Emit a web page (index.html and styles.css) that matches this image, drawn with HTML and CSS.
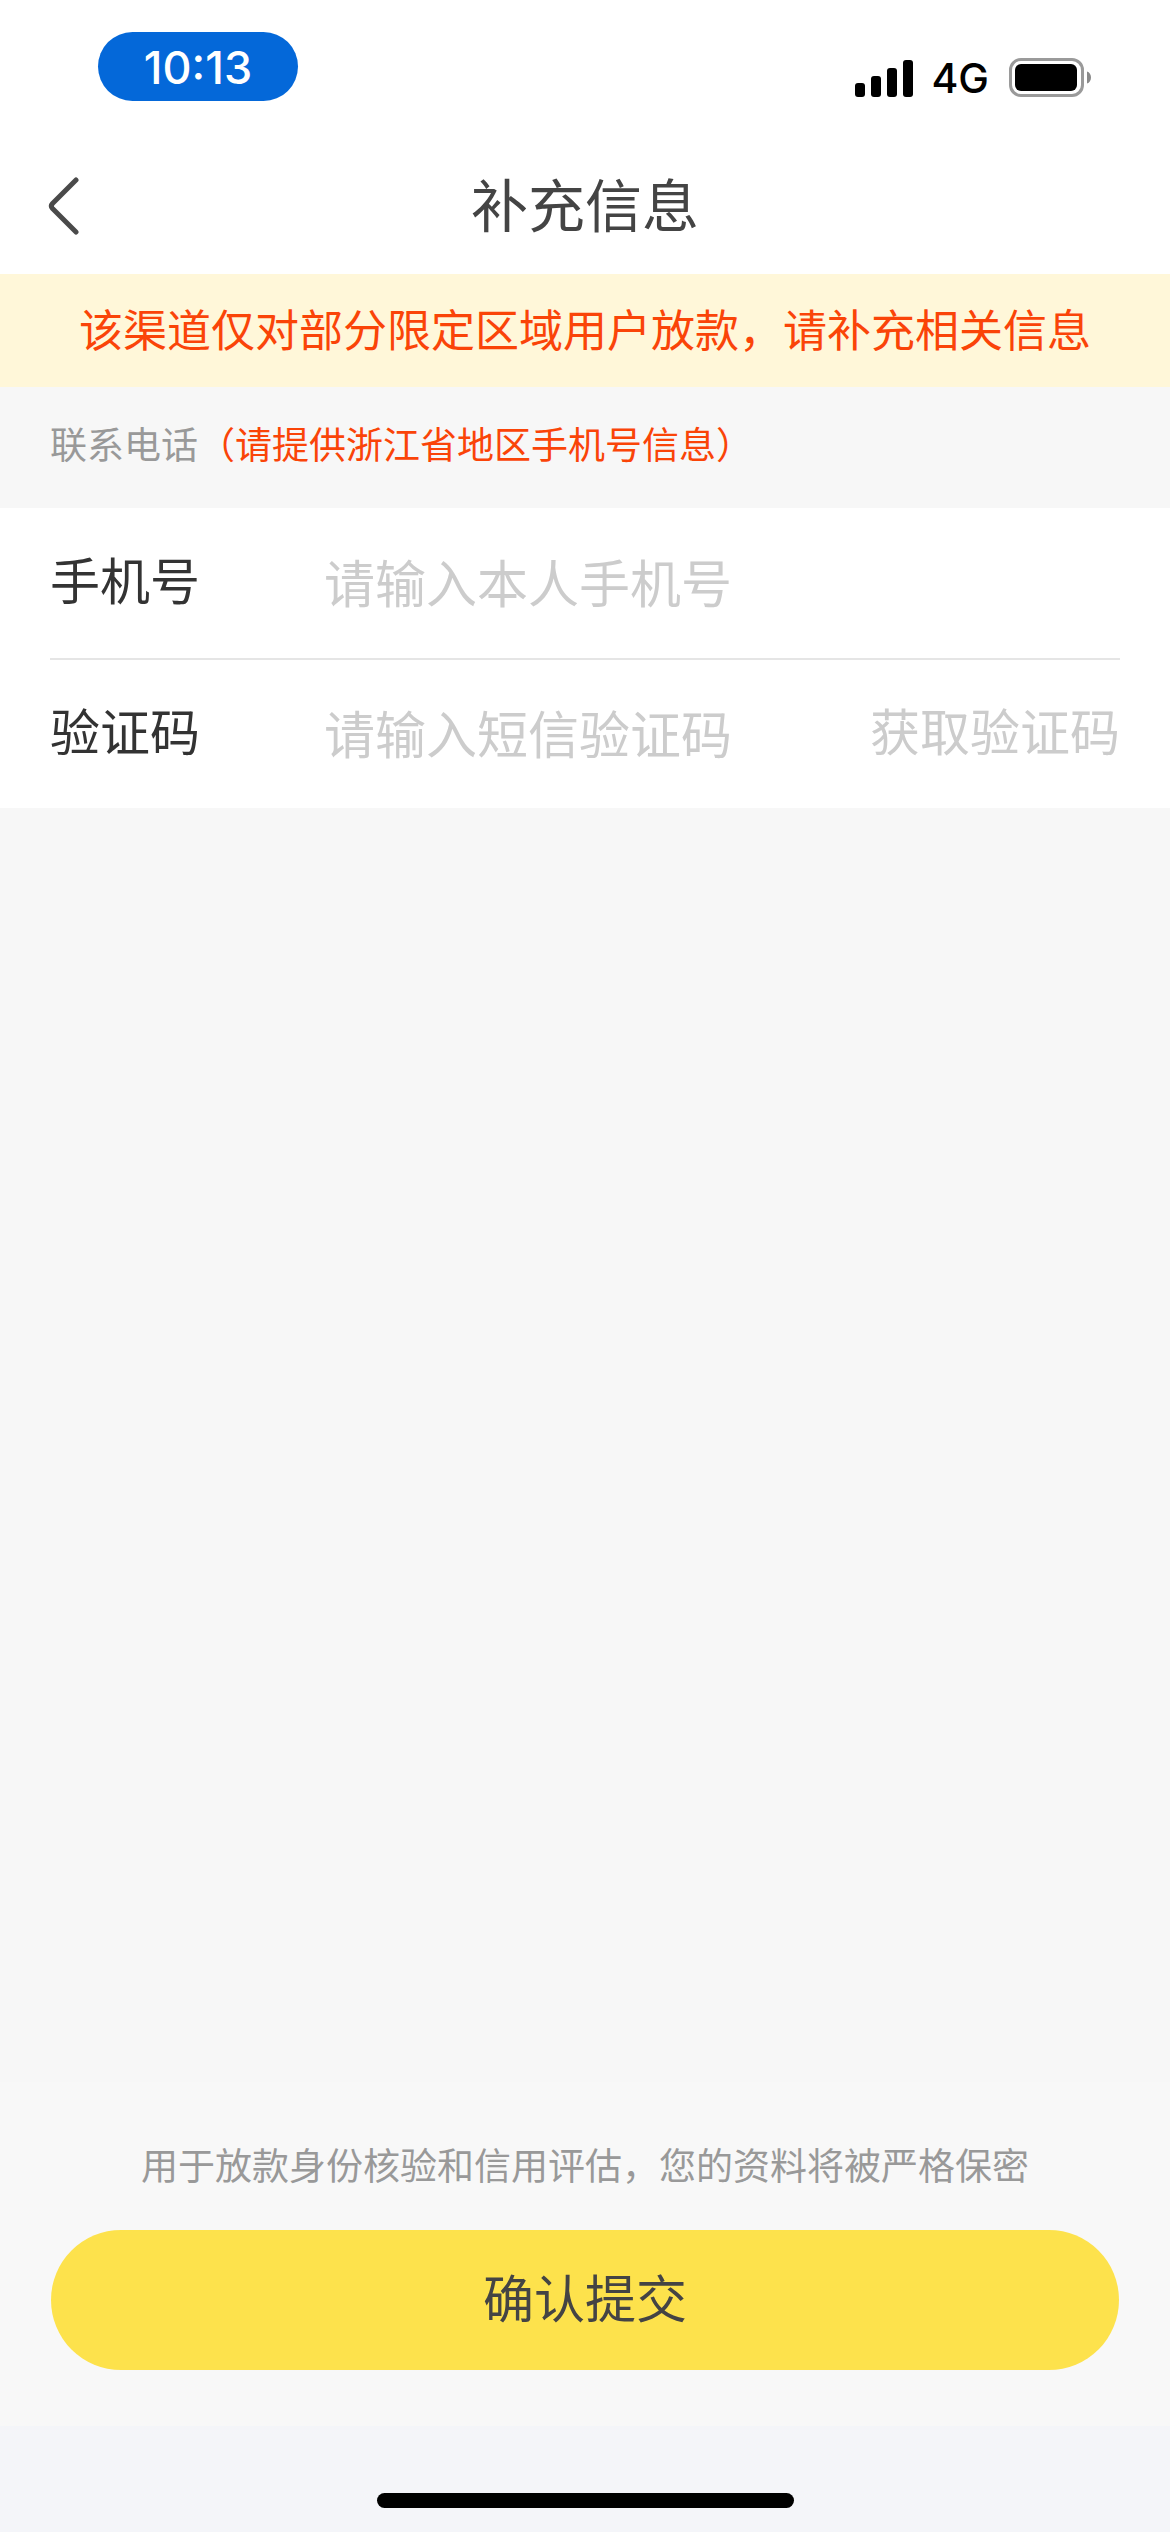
FILE: index.html
```html
<!DOCTYPE html>
<html lang="zh-CN">
<head>
  <meta charset="utf-8">
  <meta name="viewport" content="width=device-width, initial-scale=1">
  <title>补充信息</title>
  <link rel="stylesheet" href="styles.css">
</head>
<body>
  <div class="page">
    <div class="status-bar">
      <span class="status-time">10:13</span>
      <div class="status-icons">
        <svg class="icon-signal" width="58" height="38" viewBox="0 0 58 38" aria-hidden="true">
          <rect x="0" y="24" width="10" height="14" rx="3"/>
          <rect x="16" y="17" width="10" height="21" rx="3"/>
          <rect x="32" y="9" width="10" height="29" rx="3"/>
          <rect x="48" y="1" width="10" height="37" rx="3"/>
        </svg>
        <span class="status-network">4G</span>
        <svg class="icon-battery" width="82" height="39" viewBox="0 0 82 39" aria-hidden="true">
          <rect x="1.5" y="1.5" width="72" height="36" rx="10.5" fill="none" stroke="#9a9a9a" stroke-width="3"/>
          <rect x="6" y="6" width="62" height="27" rx="6"/>
          <path d="M78 13.5c2.500.8 4 3 4 6s-1.500 5.200-4 6z" fill="#8a8a8a"/>
        </svg>
      </div>
    </div>

    <header class="nav">
      <button class="nav-back" type="button" aria-label="返回">
        <svg width="32" height="60" viewBox="0 0 32 60" aria-hidden="true">
          <path d="M28 4 4.500 27.500q-2.300 2.500 0 5L28 56" fill="none" stroke="#4a4a4a" stroke-width="5" stroke-linecap="round" stroke-linejoin="round"/>
        </svg>
      </button>
      <h1 class="nav-title">补充信息</h1>
    </header>

    <p class="notice">该渠道仅对部分限定区域用户放款，请补充相关信息</p>

    <form class="form">
      <h2 class="section-title">联系电话<span class="section-hint">（请提供浙江省地区手机号信息）</span></h2>
      <div class="fields">
        <div class="field">
          <label class="field-label" for="phone">手机号</label>
          <input class="field-input" id="phone" type="tel" placeholder="请输入本人手机号">
        </div>
        <div class="field">
          <label class="field-label" for="code">验证码</label>
          <input class="field-input" id="code" type="text" inputmode="numeric" placeholder="请输入短信验证码">
          <button class="field-action" type="button">获取验证码</button>
        </div>
      </div>

      <div class="submit-bar">
        <p class="submit-note">用于放款身份核验和信用评估，您的资料将被严格保密</p>
        <button class="submit-button" type="submit">确认提交</button>
      </div>
    </form>

    <div class="home-area">
      <div class="home-indicator"></div>
    </div>
  </div>
</body>
</html>
```
FILE: styles.css
```css
* {
  box-sizing: border-box;
}

body {
  margin: 0;
  background: #f7f7f7;
  color: #333;
  font-family: "Noto Sans CJK SC", "Noto Sans", sans-serif;
}

h1,
h2,
p {
  margin: 0;
  font-weight: 400;
}

button,
input {
  margin: 0;
  padding: 0;
  border: 0;
  background: none;
  color: inherit;
  font-family: inherit;
}

svg {
  display: block;
}

.page {
  display: flex;
  flex-direction: column;
  min-height: 100vh;
}

/* Status bar */
.status-bar {
  display: flex;
  justify-content: space-between;
  align-items: flex-start;
  height: 138px;
  padding: 32px 79px 0 98px;
  background: #fff;
  color: #000;
  font-family: Inter, sans-serif;
  font-weight: 500;
}

.status-time {
  width: 200px;
  height: 69px;
  border-radius: 35px;
  background: #0468d9;
  color: #fff;
  font-size: 45px;
  line-height: 71px;
  text-align: center;
}

.status-icons {
  display: flex;
  align-items: center;
  height: 91px;
}

.status-network {
  margin: 0 20px 0 18px;
  font-size: 41px;
  line-height: 48px;
}

/* Title bar */
.nav {
  display: grid;
  grid-template-columns: 120px 1fr 120px;
  align-items: center;
  height: 136px;
  background: #fff;
}

.nav-back {
  display: flex;
  align-items: center;
  height: 100%;
  padding-left: 48px;
}

.nav-title {
  padding-bottom: 8px;
  color: #444;
  font-size: 57px;
  line-height: 80px;
  text-align: center;
}

.notice {
  padding: 22px 0 26px;
  background: #fff7d9;
  color: #fa4408;
  font-size: 44px;
  line-height: 65px;
  text-align: center;
}

/* Form */
.form {
  display: flex;
  flex: 1;
  flex-direction: column;
}

.section-title {
  padding: 28px 50px 37px;
  color: #999;
  font-size: 37px;
  line-height: 56px;
}

.section-hint {
  color: #fa4408;
}

.fields {
  padding: 0 50px;
  background: #fff;
}

.field {
  display: flex;
  align-items: center;
  height: 150px;
  padding-bottom: 10px;
}

.field + .field {
  border-top: 2px solid #e5e5e5;
}

.field-label {
  width: 274px;
  font-size: 50px;
  line-height: 72px;
}

.field-input {
  flex: 1;
  min-width: 0;
  height: 78px;
  padding-top: 6px;
  outline: 0;
  font-size: 51px;
}

.field-input::placeholder {
  color: #ccc;
  opacity: 1;
}

.field-action {
  color: #ccc;
  font-size: 50px;
  line-height: 72px;
}

.submit-bar {
  margin-top: auto;
  padding: 54px 51px 56px;
  background: #f8f8f8;
}

.submit-note {
  margin-bottom: 38px;
  color: #999;
  font-size: 37px;
  line-height: 56px;
  text-align: center;
}

.submit-button {
  width: 100%;
  height: 140px;
  padding-bottom: 8px;
  border-radius: 70px;
  background: #fde24c;
  color: #444;
  font-size: 51px;
}

/* Home indicator */
.home-area {
  height: 106px;
  padding-top: 67px;
  background: #f4f5f9;
}

.home-indicator {
  width: 417px;
  height: 15px;
  margin: 0 auto;
  border-radius: 8px;
  background: #000;
}
```
